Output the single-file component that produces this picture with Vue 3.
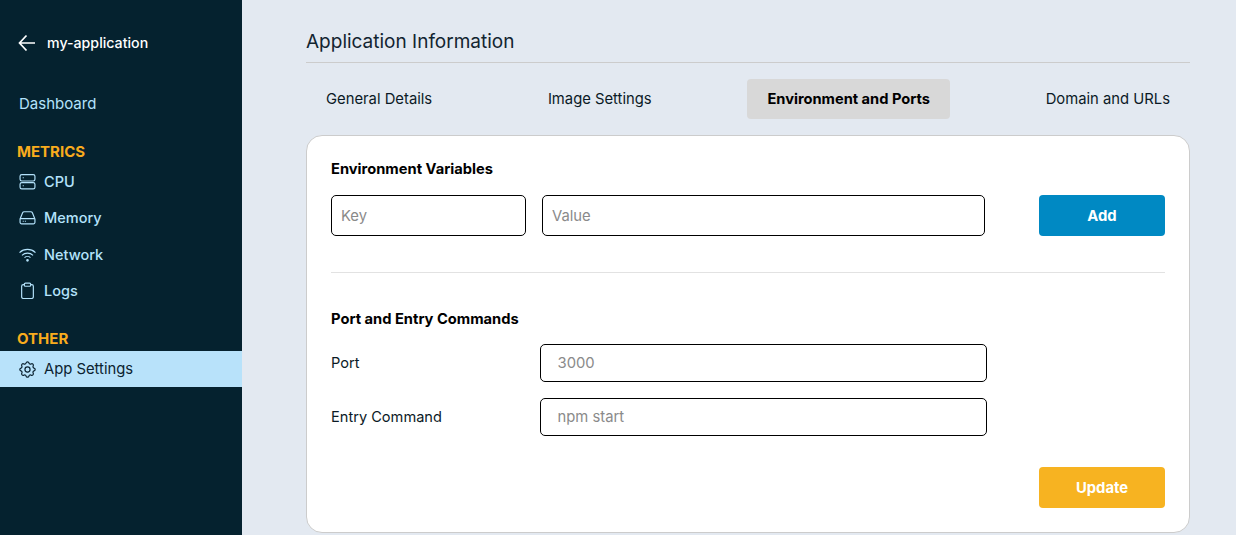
<template>
  <div class="page">
    <aside class="sidebar">
      <div class="app-name">
        <svg class="back" viewBox="0 0 18 18" fill="none" stroke="#fff" stroke-width="1.7">
          <path d="M17 9H1.500M8.500 1.500 1.500 9l7 7.500" />
        </svg>
        <span>my-application</span>
      </div>
      <a class="dashboard">Dashboard</a>

      <h4 class="group metrics">METRICS</h4>
      <a v-for="item in metrics" :key="item.label" class="nav-item">
        <svg class="icon" viewBox="0 0 16 16" fill="none" stroke="currentColor" stroke-width="1.1" v-html="item.icon"></svg>
        <span>{{ item.label }}</span>
      </a>

      <h4 class="group other">OTHER</h4>
      <a class="nav-item active">
        <svg class="icon" viewBox="2 2 20 20" fill="none" stroke="currentColor" stroke-width="1.4" stroke-linecap="round" stroke-linejoin="round">
          <path d="M10.3 4.3c.4-1.8 3-1.800 3.400 0a1.700 1.700 0 0 0 2.600 1.100c1.500-.9 3.300.8 2.400 2.400a1.700 1.700 0 0 0 1 2.500c1.800.4 1.800 3 0 3.400a1.700 1.700 0 0 0-1 2.600c.9 1.500-.9 3.300-2.400 2.400a1.700 1.700 0 0 0-2.600 1c-.4 1.800-3 1.800-3.400 0a1.700 1.700 0 0 0-2.600-1c-1.500.9-3.300-.9-2.400-2.400a1.700 1.700 0 0 0-1-2.600c-1.800-.4-1.800-3 0-3.400a1.700 1.700 0 0 0 1-2.500c-.9-1.600.9-3.300 2.400-2.400 1 .6 2.300.1 2.600-1.100Z" />
          <circle cx="12" cy="12" r="3" />
        </svg>
        <span>App Settings</span>
      </a>
    </aside>

    <main class="content">
      <h2 class="title">Application Information</h2>

      <nav class="tabs">
        <button
          v-for="tab in tabs"
          :key="tab"
          class="tab"
          :class="{ selected: tab === activeTab }"
          @click="activeTab = tab"
        >{{ tab }}</button>
      </nav>

      <section class="card">
        <h3 class="card-heading">Environment Variables</h3>
        <div class="env-row">
          <input class="field" placeholder="Key" />
          <input class="field" placeholder="Value" />
          <button class="action add">Add</button>
        </div>

        <hr class="divider" />

        <h3 class="card-heading">Port and Entry Commands</h3>
        <div class="form-row">
          <label>Port</label>
          <input class="field tall" placeholder="3000" />
        </div>
        <div class="form-row">
          <label>Entry Command</label>
          <input class="field tall" placeholder="npm start" />
        </div>
        <div class="footer">
          <button class="action update">Update</button>
        </div>
      </section>
    </main>
  </div>
</template>

<script setup>
import { ref } from "vue";

const tabs = ["General Details", "Image Settings", "Environment and Ports", "Domain and URLs"];
const activeTab = ref("Environment and Ports");

const metrics = [
  {
    label: "CPU",
    icon: '<rect x="1" y="1.500" width="14" height="6" rx="1.600"/><rect x="1" y="9" width="14" height="6" rx="1.600"/><path d="M3.500 4.500h1M3.500 12h1"/>',
  },
  {
    label: "Memory",
    icon: '<path d="M1 9.500 3.400 3.600A1.600 1.600 0 0 1 4.900 2.600h6.200a1.600 1.600 0 0 1 1.500 1L15 9.500v3a1.500 1.500 0 0 1-1.500 1.500h-11A1.500 1.500 0 0 1 1 12.500ZM1 9h14M3.500 11.500h1M5.500 11.500h1"/>',
  },
  {
    label: "Network",
    icon: '<path d="M.5 6.200a11 11 0 0 1 15 0M2.800 8.800a7.500 7.500 0 0 1 10.400 0M5.200 11a4 4 0 0 1 5.600 0"/><circle cx="8" cy="13.500" r=".7" fill="currentColor"/>',
  },
  {
    label: "Logs",
    icon: '<path d="M5 2.500H4A1.500 1.500 0 0 0 2.500 4v10A1.500 1.500 0 0 0 4 15.500h8a1.500 1.500 0 0 0 1.500-1.500V4A1.500 1.500 0 0 0 12 2.500h-1"/><rect x="5" y="1" width="6" height="3" rx="1"/>',
  },
];
</script>

<style>
html,
body {
  margin: 0;
  overflow: hidden;
}
</style>

<style scoped>
.page {
  display: flex;
  height: 535px;
  background: #e3e9f1;
  font-family: "Inter", "Open Sans", sans-serif;
  font-size: 14.8px;
  color: #0b1a26;
  overflow: hidden;
}

.sidebar {
  width: 242px;
  flex-shrink: 0;
  background: #05222f;
  color: #b4e2fb;
}

.app-name {
  display: flex;
  align-items: center;
  gap: 11px;
  height: 20px;
  margin: 33px 0 0 18px;
  font-size: 14.200px;
  color: #fff;
  font-weight: 500;
}

.app-name span {
  margin-top: -2px;
}

.back {
  width: 18px;
  height: 18px;
}

.dashboard {
  display: block;
  margin: 41px 0 0 19px;
  line-height: 20px;
  font-size: 15px;
}

.group {
  margin: 0 0 0 17px;
  font-size: 15px;
  line-height: 20px;
  font-weight: 700;
  color: #f9ac1d;
}

.metrics {
  margin-top: 28px;
}

.other {
  margin-top: 20px;
}

.nav-item {
  display: flex;
  align-items: center;
  gap: 8px;
  height: 36.500px;
  padding-left: 19px;
  font-size: 14.500px;
  font-weight: 500;
}

.metrics + .nav-item {
  margin-top: 1px;
}

.icon {
  width: 17px;
  height: 17px;
  flex-shrink: 0;
}

.nav-item.active {
  height: 36px;
  margin-top: 2px;
  background: #b8e2fa;
  color: #0b2230;
  font-weight: 400;
  font-size: 14.800px;
}

.content {
  flex: 1;
  padding: 0 46px 0 64px;
}

.title {
  margin: 0;
  padding: 30px 0 8px;
  border-bottom: 1px solid #ccc;
  font-size: 19px;
  line-height: 24px;
  font-weight: 400;
  color: #122430;
}

.tabs {
  display: flex;
  justify-content: space-between;
  margin-top: 16px;
}

.tab {
  height: 40px;
  padding: 0 20px 1px;
  border: none;
  border-radius: 4px;
  background: transparent;
  font: inherit;
  color: inherit;
  cursor: pointer;
}

.tab.selected {
  background: #d8d8d8;
  font-size: 14.650px;
  font-weight: 700;
  color: #000;
}

.card {
  height: 398px;
  box-sizing: border-box;
  margin-top: 16px;
  padding: 24px;
  border: 1px solid #ccc;
  border-radius: 16px;
  background: #fff;
}

.card-heading {
  margin: 0;
  font-size: 14.700px;
  line-height: 18px;
  font-weight: 700;
  color: #000;
}

.env-row {
  display: grid;
  grid-template-columns: 195px 443px 1fr;
  gap: 16px;
  margin-top: 17px;
}

.field {
  box-sizing: border-box;
  height: 41px;
  width: 100%;
  padding: 0 9px;
  border: 1px solid #000;
  border-radius: 5px;
  background: #fff;
  font: inherit;
  color: #000;
  outline: none;
}

.field::placeholder {
  color: #8a8a8a;
}

.field.tall {
  height: 38px;
  padding: 0 16.500px;
}

.action {
  width: 126px;
  height: 41px;
  border: none;
  border-radius: 4px;
  color: #fff;
  font: inherit;
  font-weight: 700;
  cursor: pointer;
  justify-self: end;
}

.add {
  background: #0089c3;
}

.update {
  background: #f7b321;
}

.divider {
  margin: 36px 0 37px;
  border: none;
  border-top: 1px solid #e2e2e2;
}

.form-row {
  display: grid;
  grid-template-columns: 209px 447px;
  align-items: center;
  margin-top: 16px;
}

.form-row label {
  font-size: 14.600px;
  color: #0b1a26;
}

.footer {
  display: flex;
  justify-content: flex-end;
  margin-top: 31px;
}
</style>
